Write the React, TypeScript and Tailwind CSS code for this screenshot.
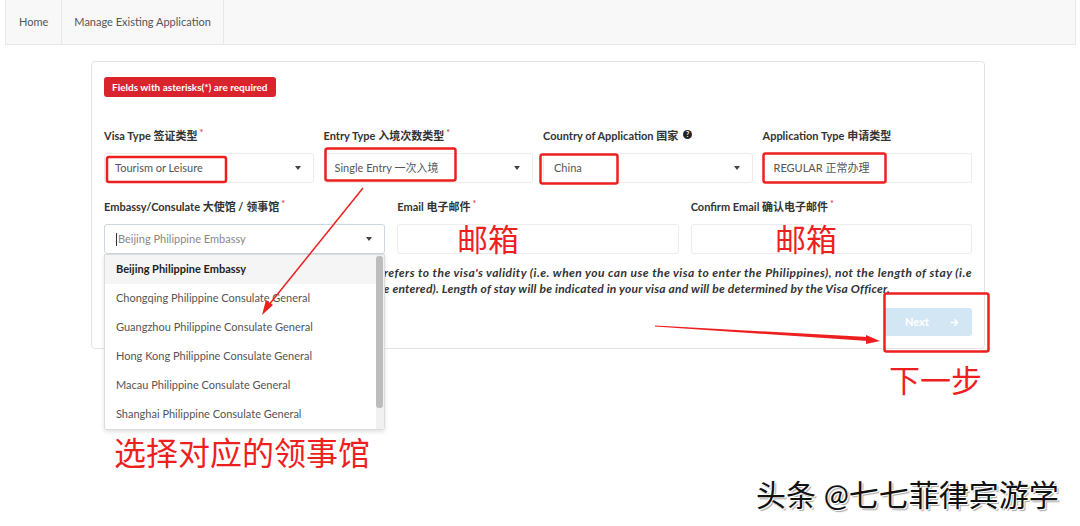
import * as React from "react";

const font = "font-['Lato','Noto_Sans_CJK_SC',sans-serif]";

function Req() {
  return <sup className="ml-[2px] text-[9px] font-normal text-[#d9232d]">*</sup>;
}

function Caret() {
  return <span className="h-0 w-0 border-x-[3.5px] border-t-[4px] border-x-transparent border-t-[#444]" />;
}

function Label({ children }: { children: React.ReactNode }) {
  return <div className="mb-[9px] h-[16px] text-[11px] leading-[16px] font-bold text-[#333]">{children}</div>;
}

function SelectBox({ value }: { value: string }) {
  return (
    <div className="flex h-[30px] items-center justify-between rounded-[3px] border border-[#ececec] pr-[12px] pl-[10px] text-[11px] text-[#555]">
      <span>{value}</span>
      <Caret />
    </div>
  );
}

const embassies = [
  "Beijing Philippine Embassy",
  "Chongqing Philippine Consulate General",
  "Guangzhou Philippine Consulate General",
  "Hong Kong Philippine Consulate General",
  "Macau Philippine Consulate General",
  "Shanghai Philippine Consulate General",
];

export default function App() {
  return (
    <div className={`relative h-[526px] w-[1080px] overflow-hidden bg-white ${font}`}>
      {/* top nav */}
      <nav className="mr-[4px] ml-[5px] flex h-[45px] border-x border-b border-[#e7e7e7] bg-[#f8f8f8] text-[11px] text-[#555]">
        <div className="flex items-center border-r border-[#e7e7e7] px-[13px]">Home</div>
        <div className="flex items-center border-r border-[#e7e7e7] px-[12px]">Manage Existing Application</div>
      </nav>

      {/* form card */}
      <div className="mt-[16px] ml-[91px] w-[894px] rounded-[4px] border border-[#e3e3e3] px-[12px] pt-[15px] pb-[12px]">
        <div className="flex h-[20px] w-fit items-center rounded-[3px] bg-[#d9232d] px-[8px] text-[10px] font-bold text-white">
          Fields with asterisks(*) are required
        </div>

        <div className="mt-[31px] grid grid-cols-4 gap-x-[10px]">
          <div>
            <Label>
              Visa Type 签证类型<Req />
            </Label>
            <SelectBox value="Tourism or Leisure" />
          </div>
          <div>
            <Label>
              Entry Type 入境次数类型<Req />
            </Label>
            <SelectBox value="Single Entry 一次入境" />
          </div>
          <div>
            <Label>
              Country of Application 国家
              <sup className="relative -top-[3px] ml-[5px] inline-flex h-[9px] w-[9px] items-center justify-center rounded-full bg-[#222] text-[7px] leading-none font-bold text-white">
                ?
              </sup>
            </Label>
            <SelectBox value="China" />
          </div>
          <div>
            <Label>Application Type 申请类型</Label>
            <div className="flex h-[30px] items-center rounded-[3px] border border-[#ececec] px-[10px] text-[11px] text-[#555]">
              REGULAR 正常办理
            </div>
          </div>
        </div>

        <div className="mt-[16px] grid grid-cols-3 gap-x-[12px]">
          <div className="relative">
            <Label>
              Embassy/Consulate 大使馆 / 领事馆<Req />
            </Label>
            <div className="flex h-[30px] items-center justify-between rounded-[3px] border border-[#cdd7e0] pr-[12px] pl-[11px] text-[11px] text-[#888]">
              <span className="flex items-center">
                <span className="mr-[1px] h-[13px] w-[1px] bg-[#333]" />
                Beijing Philippine Embassy
              </span>
              <Caret />
            </div>
            {/* open dropdown */}
            <div className="absolute top-[55px] left-0 z-10 flex w-full rounded-b-[3px] border border-[#dcdcdc] bg-white shadow-[0_2px_4px_rgba(0,0,0,0.12)]">
              <ul className="flex-1">
                {embassies.map((e, i) => (
                  <li
                    key={e}
                    className={
                      i === 0
                        ? "flex h-[29px] items-center bg-[#f5f5f5] pl-[11px] text-[11px] font-bold text-[#222]"
                        : "flex h-[29px] items-center pl-[11px] text-[11px] text-[#555]"
                    }
                  >
                    {e}
                  </li>
                ))}
              </ul>
              <div className="w-[8px] bg-[#f1f1f1] pt-[1px]">
                <div className="h-[152px] w-[7px] rounded-[3px] bg-[#bdbdbd]" />
              </div>
            </div>
          </div>
          <div>
            <Label>
              Email 电子邮件<Req />
            </Label>
            <div className="h-[30px] rounded-[3px] border border-[#ececec]" />
          </div>
          <div>
            <Label>
              Confirm Email 确认电子邮件<Req />
            </Label>
            <div className="h-[30px] rounded-[3px] border border-[#ececec]" />
          </div>
        </div>

        <div className="mt-[11px] text-[12px] leading-[16px] font-bold text-[#333] italic">
          <div className="flex justify-end overflow-hidden tracking-[0.45px] whitespace-nowrap">
            <span>
              Note: The period of validity you requested refers to the visa's validity (i.e. when you can use the visa to enter the Philippines), not the length of stay (i.e
            </span>
          </div>
          <div className="mr-[82px] flex justify-end overflow-hidden tracking-[0.2px] whitespace-nowrap">
            <span>
              how long you can stay in the Philippines once entered). Length of stay will be indicated in your visa and will be determined by the Visa Officer.
            </span>
          </div>
        </div>

        <div className="mt-[11px] flex justify-end">
          <button className="flex h-[28px] w-[88px] items-center justify-between rounded-[3px] bg-[#d3e6f4] pr-[12px] pl-[21px] text-[11px] font-bold text-white">
            Next
            <svg width="11" height="11" viewBox="0 0 24 24" fill="none" stroke="white" strokeWidth="3" strokeLinecap="round" strokeLinejoin="round">
              <path d="M5 12h14M13 6l6 6-6 6" />
            </svg>
          </button>
        </div>
      </div>

      {/* red annotations */}
      <div className="pointer-events-none absolute inset-0 z-20">
        <svg className="absolute inset-0" width="1080" height="526" viewBox="0 0 1080 526" fill="none">
          <g stroke="#ee1f1f" strokeWidth="2.5">
            <rect x="107" y="157" width="119" height="25" rx="2" />
            <rect x="325.5" y="148.5" width="130" height="32" rx="2" />
            <rect x="540.5" y="154.5" width="77" height="29" rx="2" />
            <rect x="763.5" y="153.5" width="122" height="29" rx="2" />
            <rect x="884.5" y="293.5" width="104" height="58" rx="2" />
            <line x1="363" y1="188" x2="268" y2="306" strokeWidth="1.5" />
          </g>
          <polygon points="262,315 266,300 273,305" fill="#ee1f1f" />
          <polygon points="655,325.5 868,337 868,341 655,326.5" fill="#ee1f1f" />
          <polygon points="880,341 866,335 866,344" fill="#ee1f1f" />
        </svg>
        <span className="absolute top-[219px] left-[457px] text-[31px] leading-[40px] text-[#ee1f1f]">邮箱</span>
        <span className="absolute top-[219px] left-[775px] text-[31px] leading-[40px] text-[#ee1f1f]">邮箱</span>
        <span className="absolute top-[360px] left-[889px] text-[31px] leading-[40px] text-[#ee1f1f]">下一步</span>
        <span className="absolute top-[432px] left-[114px] text-[32px] leading-[42px] text-[#ee1f1f]">选择对应的领事馆</span>
        <span className="absolute top-[474px] left-[756px] text-[30px] leading-[40px] text-[#111] [text-shadow:1px_1px_0_#fff,-1px_-1px_0_#fff,2px_2px_1px_rgba(0,0,0,0.35)]">
          头条 @七七菲律宾游学
        </span>
      </div>
    </div>
  );
}
